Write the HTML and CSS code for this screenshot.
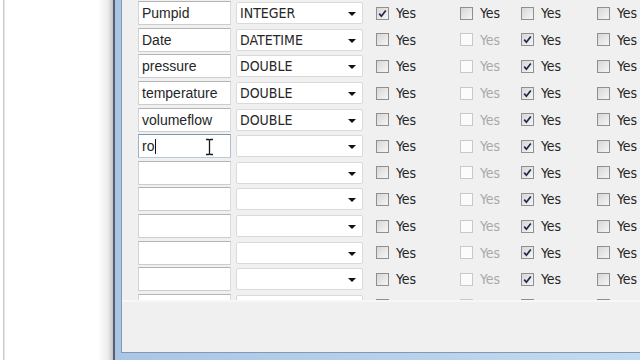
FILE: index.html
```html
<!DOCTYPE html>
<html lang="en">
<head>
    <meta charset="UTF-8">
    <title>Table columns</title>
    <link rel="stylesheet" href="styles.css">
</head>
<body>
    <div class="screen">
        <div class="side"></div>
        <div class="window">
            <div class="frame">
                <div class="client">
                    <div class="grid-pane">
                        <!-- row 1 -->
                        <div class="row">
                            <div class="cell"><div class="tb">Pumpid</div></div>
                            <div class="cell"><div class="combo"><span>INTEGER</span><i class="arrow"></i></div></div>
                            <div class="chk"><span class="box"><svg viewBox="0 0 11 11"><path d="M2.2 5.6 L4.4 8.2 L8.8 2.4"/></svg></span>Yes</div>
                            <div class="chk"><span class="box"></span>Yes</div>
                            <div class="chk"><span class="box"></span>Yes</div>
                            <div class="chk"><span class="box"></span>Yes</div>
                        </div>
                        <!-- row 2 -->
                        <div class="row">
                            <div class="cell"><div class="tb">Date</div></div>
                            <div class="cell"><div class="combo"><span>DATETIME</span><i class="arrow"></i></div></div>
                            <div class="chk"><span class="box"></span>Yes</div>
                            <div class="chk off"><span class="box"></span>Yes</div>
                            <div class="chk"><span class="box"><svg viewBox="0 0 11 11"><path d="M2.2 5.6 L4.4 8.2 L8.8 2.4"/></svg></span>Yes</div>
                            <div class="chk"><span class="box"></span>Yes</div>
                        </div>
                        <!-- row 3 -->
                        <div class="row">
                            <div class="cell"><div class="tb">pressure</div></div>
                            <div class="cell"><div class="combo"><span>DOUBLE</span><i class="arrow"></i></div></div>
                            <div class="chk"><span class="box"></span>Yes</div>
                            <div class="chk off"><span class="box"></span>Yes</div>
                            <div class="chk"><span class="box"><svg viewBox="0 0 11 11"><path d="M2.2 5.6 L4.4 8.2 L8.8 2.4"/></svg></span>Yes</div>
                            <div class="chk"><span class="box"></span>Yes</div>
                        </div>
                        <!-- row 4 -->
                        <div class="row">
                            <div class="cell"><div class="tb">temperature</div></div>
                            <div class="cell"><div class="combo"><span>DOUBLE</span><i class="arrow"></i></div></div>
                            <div class="chk"><span class="box"></span>Yes</div>
                            <div class="chk off"><span class="box"></span>Yes</div>
                            <div class="chk"><span class="box"><svg viewBox="0 0 11 11"><path d="M2.2 5.6 L4.4 8.2 L8.8 2.4"/></svg></span>Yes</div>
                            <div class="chk"><span class="box"></span>Yes</div>
                        </div>
                        <!-- row 5 -->
                        <div class="row">
                            <div class="cell"><div class="tb">volumeflow</div></div>
                            <div class="cell"><div class="combo"><span>DOUBLE</span><i class="arrow"></i></div></div>
                            <div class="chk"><span class="box"></span>Yes</div>
                            <div class="chk off"><span class="box"></span>Yes</div>
                            <div class="chk"><span class="box"><svg viewBox="0 0 11 11"><path d="M2.2 5.6 L4.4 8.2 L8.8 2.4"/></svg></span>Yes</div>
                            <div class="chk"><span class="box"></span>Yes</div>
                        </div>
                        <!-- row 6, being edited -->
                        <div class="row">
                            <div class="cell">
                                <div class="tb focus">ro<span class="caret"></span>
                                    <svg class="ibeam" viewBox="0 0 9 18"><path d="M1 1.5h2.5q1 0 1 1v13q0 1-1 1H1M8 1.5H5.5q-1 0-1 1v13q0 1 1 1H8"/></svg>
                                </div>
                            </div>
                            <div class="cell"><div class="combo"><span></span><i class="arrow"></i></div></div>
                            <div class="chk"><span class="box"></span>Yes</div>
                            <div class="chk off"><span class="box"></span>Yes</div>
                            <div class="chk"><span class="box"><svg viewBox="0 0 11 11"><path d="M2.2 5.6 L4.4 8.2 L8.8 2.4"/></svg></span>Yes</div>
                            <div class="chk"><span class="box"></span>Yes</div>
                        </div>
                        <!-- empty rows -->
                        <div class="row">
                            <div class="cell"><div class="tb"></div></div>
                            <div class="cell"><div class="combo"><span></span><i class="arrow"></i></div></div>
                            <div class="chk"><span class="box"></span>Yes</div>
                            <div class="chk off"><span class="box"></span>Yes</div>
                            <div class="chk"><span class="box"><svg viewBox="0 0 11 11"><path d="M2.2 5.6 L4.4 8.2 L8.8 2.4"/></svg></span>Yes</div>
                            <div class="chk"><span class="box"></span>Yes</div>
                        </div>
                        <div class="row">
                            <div class="cell"><div class="tb"></div></div>
                            <div class="cell"><div class="combo"><span></span><i class="arrow"></i></div></div>
                            <div class="chk"><span class="box"></span>Yes</div>
                            <div class="chk off"><span class="box"></span>Yes</div>
                            <div class="chk"><span class="box"><svg viewBox="0 0 11 11"><path d="M2.2 5.6 L4.4 8.2 L8.8 2.4"/></svg></span>Yes</div>
                            <div class="chk"><span class="box"></span>Yes</div>
                        </div>
                        <div class="row">
                            <div class="cell"><div class="tb"></div></div>
                            <div class="cell"><div class="combo"><span></span><i class="arrow"></i></div></div>
                            <div class="chk"><span class="box"></span>Yes</div>
                            <div class="chk off"><span class="box"></span>Yes</div>
                            <div class="chk"><span class="box"><svg viewBox="0 0 11 11"><path d="M2.2 5.6 L4.4 8.2 L8.8 2.4"/></svg></span>Yes</div>
                            <div class="chk"><span class="box"></span>Yes</div>
                        </div>
                        <div class="row">
                            <div class="cell"><div class="tb"></div></div>
                            <div class="cell"><div class="combo"><span></span><i class="arrow"></i></div></div>
                            <div class="chk"><span class="box"></span>Yes</div>
                            <div class="chk off"><span class="box"></span>Yes</div>
                            <div class="chk"><span class="box"><svg viewBox="0 0 11 11"><path d="M2.2 5.6 L4.4 8.2 L8.8 2.4"/></svg></span>Yes</div>
                            <div class="chk"><span class="box"></span>Yes</div>
                        </div>
                        <div class="row">
                            <div class="cell"><div class="tb"></div></div>
                            <div class="cell"><div class="combo"><span></span><i class="arrow"></i></div></div>
                            <div class="chk"><span class="box"></span>Yes</div>
                            <div class="chk off"><span class="box"></span>Yes</div>
                            <div class="chk"><span class="box"><svg viewBox="0 0 11 11"><path d="M2.2 5.6 L4.4 8.2 L8.8 2.4"/></svg></span>Yes</div>
                            <div class="chk"><span class="box"></span>Yes</div>
                        </div>
                        <!-- next row, scrolled mostly out of view -->
                        <div class="row">
                            <div class="cell"><div class="tb"></div></div>
                            <div class="cell"><div class="combo"></div></div>
                            <div class="chk"><span class="box"></span></div>
                            <div class="chk off"><span class="box"></span></div>
                            <div class="chk"><span class="box"></span></div>
                            <div class="chk"><span class="box"></span></div>
                        </div>
                    </div>
                </div>
            </div>
        </div>
    </div>
</body>
</html>
```

FILE: styles.css
```css
body {
    margin: 0;
    width: 640px;
    height: 360px;
    overflow: hidden;
    background: #fff;
    font-family: "Liberation Sans", Arial, sans-serif;
}

.screen {
    display: flex;
    height: 360px;
}

/* white pane behind the dialog */
.side {
    width: 113px;
    flex: none;
    background: linear-gradient(to right,
        #fff 0, #fff 3px, #cdcdcd 3px, #cdcdcd 4px, #e4e4e4 4px, #e4e4e4 5px,
        #fff 5px, #fff 98px, #ececec 108px, #c4c4c4 113px);
}

.window {
    flex: 1;
    display: flex;
    border-left: 2px solid #56616d;
}

.frame {
    flex: 1;
    display: flex;
    padding: 0 0 7px 6px;
    background: linear-gradient(to right, #a9c6e6, #c4daf0);
}

.client {
    flex: 1;
    background: #f0f0f0;
    border-left: 1px solid #8399b1;
    border-bottom: 1px solid #8399b1;
}

.grid-pane {
    height: 300px;
    overflow: hidden;
    padding-left: 16px;
    border-bottom: 2px solid #f7f7f7;
}

.row {
    display: grid;
    grid-template-columns: 98px 140px 84px 61px 76px 1fr;
    align-items: center;
    height: 26.6px;
}

.tb {
    position: relative;
    box-sizing: border-box;
    width: 93px;
    height: 24px;
    padding-left: 3px;
    background: #fff;
    border: 1px solid;
    border-color: #b4b4b4 #dcdcdc #cdcdcd #d4d4d4;
    font-size: 14px;
    line-height: 22px;
    color: #262626;
    white-space: nowrap;
}

.tb.focus {
    border-color: #7d97ae #aebfd0 #b8c9d8 #9fb3c6;
}

.caret {
    display: inline-block;
    width: 1px;
    height: 15px;
    margin-left: 1px;
    vertical-align: -3px;
    background: #111;
}

.ibeam {
    position: absolute;
    left: 66px;
    top: 3px;
    width: 9px;
    height: 18px;
    fill: none;
    stroke: #1a1a1a;
    stroke-width: 1.3;
}

.combo {
    box-sizing: border-box;
    display: flex;
    align-items: center;
    justify-content: space-between;
    width: 127px;
    height: 22px;
    padding: 0 6px 0 3px;
    background: #fff;
    border: 1px solid #dadada;
    border-radius: 2px;
    font-family: "Liberation Sans Narrow", "DejaVu Sans Condensed", "Liberation Sans", sans-serif;
    font-size: 14px;
    color: #262626;
}

.arrow {
    width: 0;
    height: 0;
    margin-top: 2px;
    border-left: 4px solid transparent;
    border-right: 4px solid transparent;
    border-top: 4px solid #111;
}

.chk {
    display: flex;
    align-items: center;
    gap: 7px;
    font-family: "Liberation Sans Narrow", "DejaVu Sans Condensed", "Liberation Sans", sans-serif;
    font-size: 14px;
    color: #252525;
}

.box {
    box-sizing: border-box;
    display: grid;
    place-items: center;
    width: 13px;
    height: 13px;
    border: 1px solid #8f8f8f;
    background: linear-gradient(135deg, #d6d6d6, #f6f6f6);
}

.box svg {
    width: 11px;
    height: 11px;
    fill: none;
    stroke: #1d2848;
    stroke-width: 1.7;
}

.chk.off {
    color: #a9a9a9;
}

.chk.off .box {
    border-color: #c9c9c9;
    background: #fbfbfb;
}
```
